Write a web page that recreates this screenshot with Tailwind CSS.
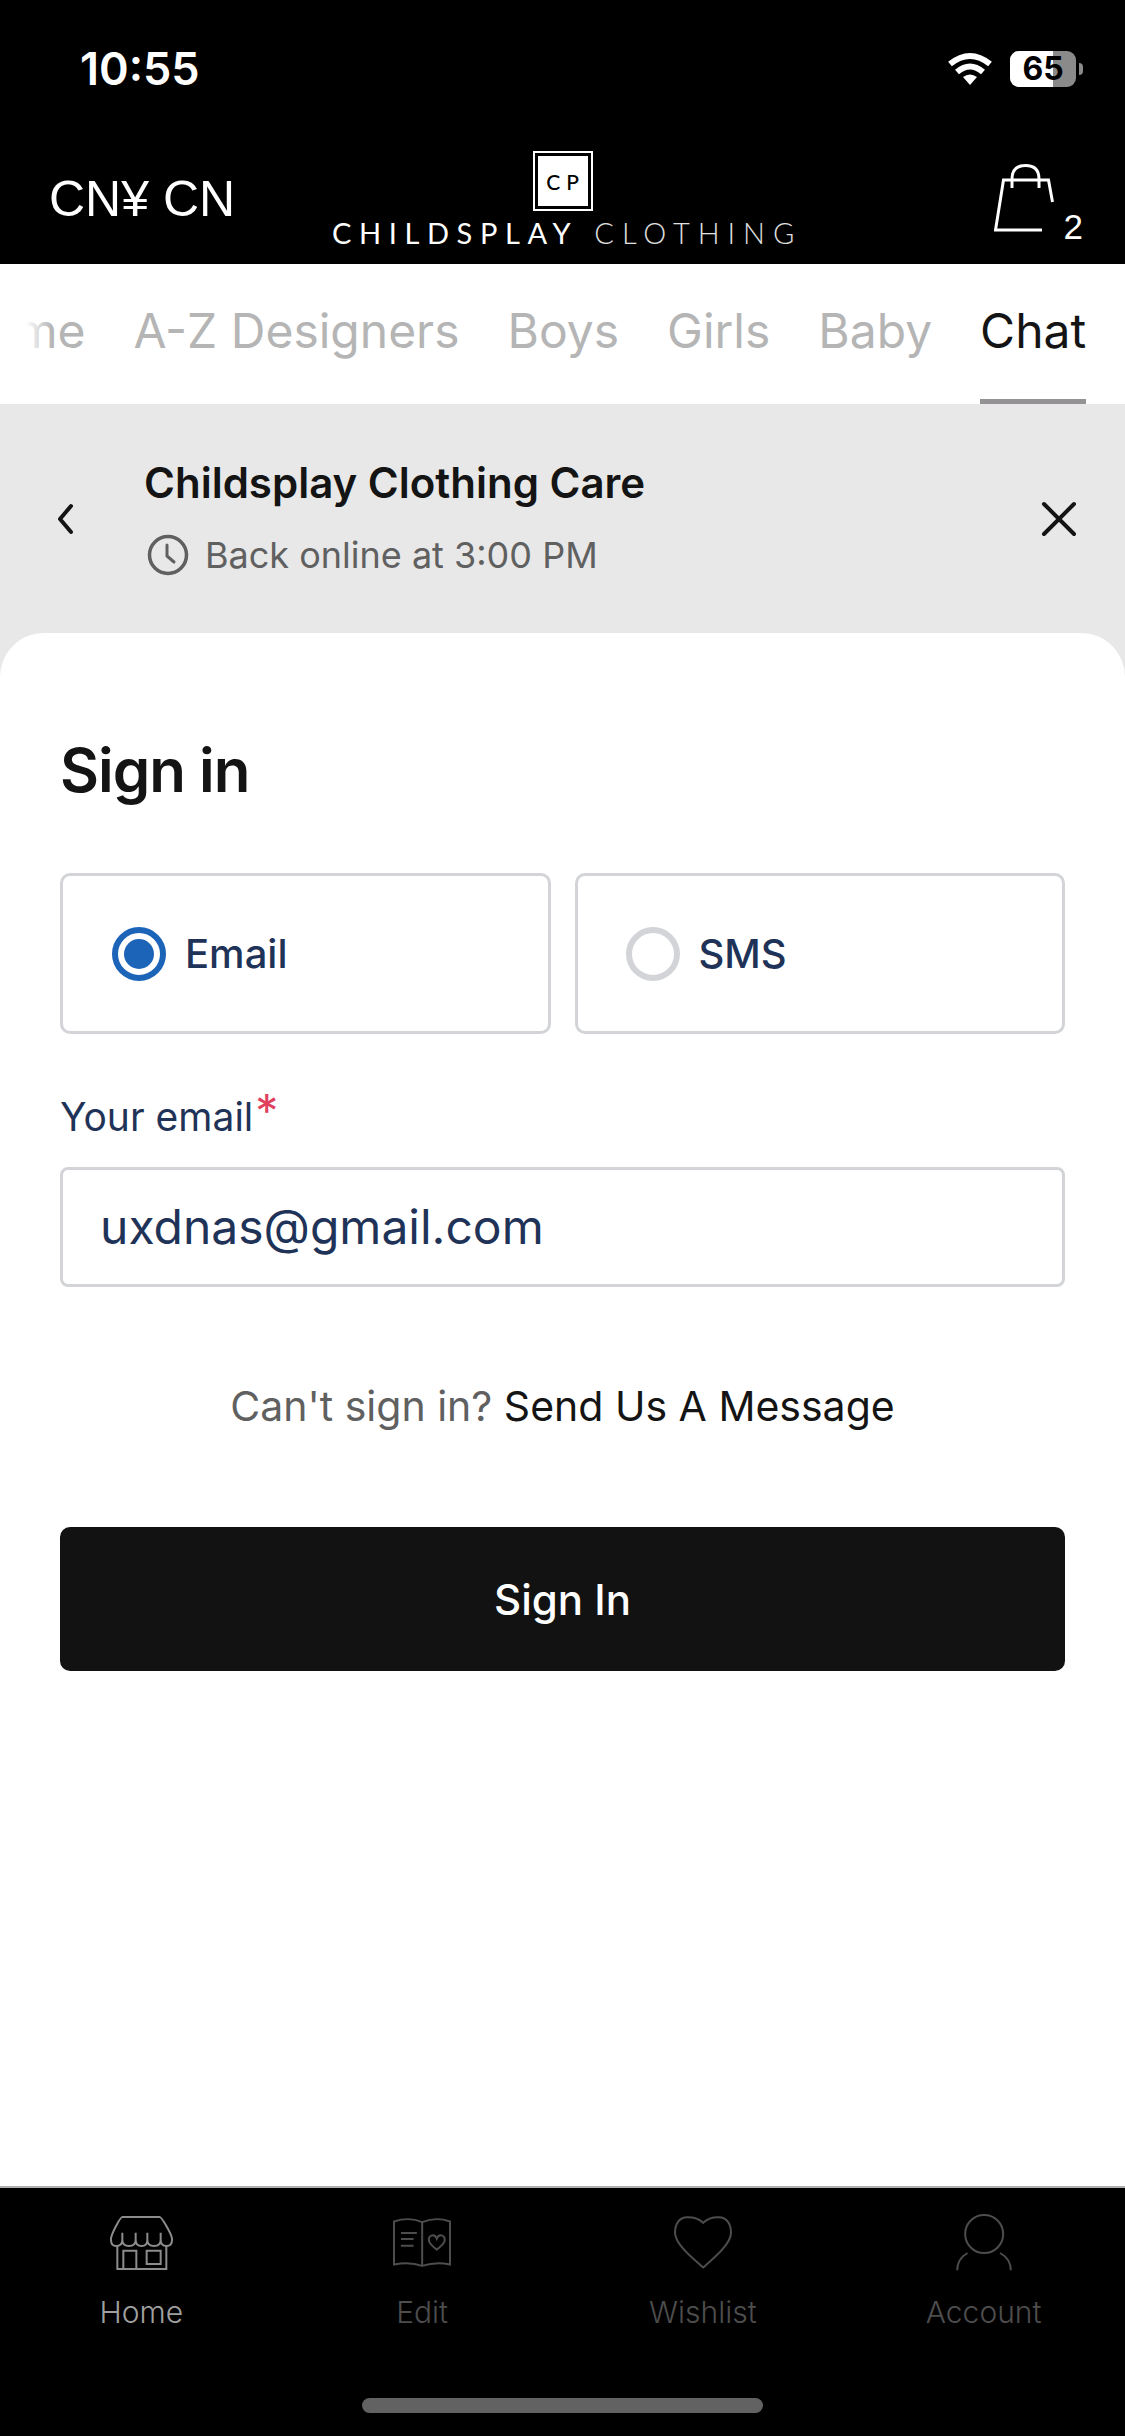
<!DOCTYPE html>
<html lang="en">
<head>
    <meta charset="UTF-8">
    <title>Childsplay Clothing</title>
    <script src="https://cdn.jsdelivr.net/npm/@tailwindcss/browser@4"></script>
</head>
<body class="bg-white">
    <div class="w-[1125px] h-[2436px] flex flex-col overflow-hidden font-['Inter',sans-serif] text-[#141414]">

        <!-- status bar + store header -->
        <div class="h-[264px] bg-black text-white flex flex-col shrink-0">
            <div class="h-[136px] flex justify-between pl-[80px] pr-[42px] pt-[43px]">
                <span class="text-[45px] leading-[52px] font-semibold">10:55</span>
                <div class="flex gap-[17px] h-[36px] mt-[8px]">
                    <svg class="w-[46px] h-[34px]" viewBox="0 0 46 34" fill="none" stroke="white" stroke-width="6"><path d="M3 13Q23 -3 43 13"/><path d="M10 21Q23 10 36 21"/><path d="M23 34L16 26Q23 21 30 26Z" fill="white" stroke="none"/></svg>
                    <div class="flex items-center">
                        <div class="relative w-[66px] h-[36px]">
                            <div class="absolute inset-0 rounded-[9px] bg-[#8a8a8a] overflow-hidden">
                                <div class="h-full w-[43px] bg-white"></div>
                            </div>
                            <span class="absolute inset-0 text-center text-[32px] leading-[36px] font-bold text-black">65</span>
                        </div>
                        <div class="w-[4px] h-[12px] ml-[3px] rounded-r-[4px] bg-[#8a8a8a]"></div>
                    </div>
                </div>
            </div>
            <div class="relative flex-1 flex justify-between pl-[49px] pr-[42px]">
                <span class="text-[50px] leading-[56px] mt-[35px] font-['Liberation_Sans',sans-serif]">CN¥ CN</span>
                <div class="absolute left-[332px] top-[15px] w-[461px] flex flex-col items-center">
                    <div class="w-[60px] h-[60px] bg-white border-[2px] border-white outline-[3px] outline-black -outline-offset-[5px] flex items-center justify-center">
                        <span class="text-[21px] leading-none font-medium text-black tracking-[6px] pl-[6px] font-['Lato',sans-serif]">CP</span>
                    </div>
                    <div class="mt-[7px] w-full flex gap-[16px] text-[29px] leading-[30px] font-['Lato',sans-serif] whitespace-nowrap">
                        <span class="tracking-[7.600px] font-normal">CHILDSPLAY</span>
                        <span class="tracking-[7.950px] font-light text-[#e0e0e0]">CLOTHING</span>
                    </div>
                </div>
                <div class="flex items-start mt-[28px]">
                    <svg class="w-[62px] h-[68px]" viewBox="0 0 62 68" fill="none" stroke="white" stroke-width="3"><path d="M48 66H1.500L9.500 16H54.500L58.500 38"/><path d="M18 24V15C18 6 23 1.500 31.500 1.500S45 6 45 15V24"/></svg>
                    <span class="text-[35px] leading-[36px] mt-[45px] ml-[8px] font-['Liberation_Sans',sans-serif]">2</span>
                </div>
            </div>
        </div>

        <!-- category tabs -->
        <div class="relative h-[140px] shrink-0 overflow-hidden text-[48px] leading-[56px] text-[#b5b5b5] whitespace-nowrap">
            <div class="flex gap-[48px] pt-[39px]">
                <span class="-ml-[49px]">Home</span>
                <span>A-Z Designers</span>
                <span>Boys</span>
                <span>Girls</span>
                <span>Baby</span>
                <span class="text-[#141414] relative">Chat
                    <span class="absolute left-0 right-0 top-[96px] h-[5px] bg-[#949294]"></span>
                </span>
            </div>
            <div class="absolute inset-y-0 left-0 w-[52px] bg-gradient-to-r from-white from-50% to-white/0"></div>
        </div>

        <!-- chat panel -->
        <div class="flex-1 bg-[#e8e8e8] flex flex-col min-h-0">
            <div class="h-[229px] shrink-0 flex justify-between pl-[56px] pr-[48px]">
                <svg class="w-[20px] h-[32px] mt-[99px]" viewBox="0 0 20 32" fill="none" stroke="#141414" stroke-width="4" stroke-linecap="round" stroke-linejoin="round"><path d="M15 3L4 16L15 29"/></svg>
                <div class="flex-1 ml-[8px] pl-[60px] pt-[53px]">
                    <div class="text-[42px] leading-[52px] font-semibold">Childsplay Clothing Care</div>
                    <div class="flex items-center mt-[24px] text-[#606060] text-[36px] leading-[44px]">
                        <svg class="w-[42px] h-[42px] ml-[3px] mr-[16px]" viewBox="0 0 42 42" fill="none" stroke="#606060" stroke-width="3.500"><circle cx="21" cy="21" r="18.500"/><path d="M20 11V22L27 28" stroke-linecap="round" stroke-linejoin="round" stroke-width="3"/></svg>
                        <span>Back online at 3:00 PM</span>
                    </div>
                </div>
                <svg class="w-[36px] h-[36px] mt-[97px]" viewBox="0 0 36 36" fill="none" stroke="#141414" stroke-width="4" stroke-linecap="round"><path d="M3 3L33 33M33 3L3 33"/></svg>
            </div>

            <div class="flex-1 bg-white rounded-t-[44px] px-[60px] pt-[102px]">
                <h1 class="text-[60px] leading-[70px] font-semibold tracking-[-1px]">Sign in</h1>

                <div class="grid grid-cols-2 gap-[24px] mt-[68px]">
                    <div class="h-[161px] border-[3px] border-[#d2d4d7] rounded-[10px] flex items-center pl-[49px] text-[#1f3358] text-[40px] font-medium">
                        <span class="w-[54px] h-[54px] rounded-full border-[6px] border-[#1c64b8] flex items-center justify-center mr-[19px]">
                            <span class="w-[30px] h-[30px] rounded-full bg-[#1c64b8]"></span>
                        </span>
                        Email
                    </div>
                    <div class="h-[161px] border-[3px] border-[#d2d4d7] rounded-[10px] flex items-center pl-[48px] text-[#1f3358] text-[40px] font-medium">
                        <span class="w-[54px] h-[54px] rounded-full border-[6px] border-[#d2d4d7] mr-[19px]"></span>
                        SMS
                    </div>
                </div>

                <div class="mt-[60px] h-[46px] text-[39px] leading-[46px] text-[#1f3358] flex">
                    Your email<span class="text-[#e0405e] text-[46px] leading-[46px] ml-[2px] -mt-[6px]">*</span>
                </div>
                <div class="mt-[27px] h-[120px] border-[3px] border-[#d2d4d7] rounded-[8px] flex items-center pl-[37px] text-[48px] text-[#1f3358]">uxdnas@gmail.com</div>

                <div class="mt-[94px] text-center text-[41px] leading-[50px]">
                    <span class="text-[#606060]">Can't sign in?</span> <span class="text-[#141414]">Send Us A Message</span>
                </div>

                <button class="mt-[96px] w-full h-[144px] bg-[#121212] text-white rounded-[10px] text-[42px] font-medium">Sign In</button>
            </div>
        </div>

        <!-- bottom tab bar -->
        <div class="h-[250px] shrink-0 bg-black border-t-[2px] border-[#b0b0b0] relative">
            <div class="grid grid-cols-4 px-[1px] pt-[28px]">
                <div class="flex flex-col items-center text-[#a0a0a0]">
                    <svg class="w-[63px] h-[54px]" viewBox="0 0 189 162" fill="none" stroke="#8c8c8c" stroke-width="6"><path d="M37 3H149C155 3 189 60 186 72Q186 90 170 90Q152 90 152 72Q152 90 132 90Q112 90 112 72Q112 90 95 90Q77 90 77 72Q77 90 57 90Q37 90 37 72Q37 90 18 90Q3 90 3 72C0 60 31 3 37 3Z"/><path d="M37 50V72M77 50V72M112 50V72M152 50V72"/><path d="M22 90V159H169V90"/><path d="M40 159V104H79V159M110 104H152V144H110Z"/></svg>
                    <span class="text-[30px] leading-[36px] mt-[24px] font-light">Home</span>
                </div>
                <div class="flex flex-col items-center text-[#4d4d4d]">
                    <svg class="w-[58px] h-[49px] mt-[2px]" viewBox="0 0 175 147" fill="none" stroke="#4d4d4d" stroke-width="6"><path d="M3 140V10Q50 -5 88 12Q130 -5 172 10V140Q130 130 88 144Q50 130 3 140Z"/><path d="M88 12V144M24 45H72M24 63H62M24 83H62"/><path d="M132 62C126 46 108 50 108 66C108 78 124 88 132 95C140 88 156 78 156 66C156 50 138 46 132 62Z"/></svg>
                    <span class="text-[30px] leading-[36px] mt-[27px] font-light">Edit</span>
                </div>
                <div class="flex flex-col items-center text-[#4d4d4d]">
                    <svg class="w-[58px] h-[53px]" viewBox="0 0 175 159" fill="none" stroke="#4d4d4d" stroke-width="6"><path d="M88 20C70 2 50 3 40 3C15 3 3 25 3 50C3 85 60 130 88 155C116 130 172 85 172 50C172 25 160 3 135 3C125 3 106 2 88 20Z"/></svg>
                    <span class="text-[30px] leading-[36px] mt-[25px] font-light">Wishlist</span>
                </div>
                <div class="flex flex-col items-center text-[#4d4d4d]">
                    <svg class="w-[56px] h-[57px] -mt-[2px]" viewBox="0 0 167 171" fill="none" stroke="#4d4d4d" stroke-width="6"><circle cx="84" cy="60" r="57"/><path d="M3 169Q3 135 34 117M164 169Q164 135 132 117"/></svg>
                    <span class="text-[30px] leading-[36px] mt-[23px] font-light">Account</span>
                </div>
            </div>
            <div class="absolute left-[362px] top-[210px] w-[401px] h-[15px] rounded-full bg-[#626262]"></div>
        </div>
    </div>
</body>
</html>
